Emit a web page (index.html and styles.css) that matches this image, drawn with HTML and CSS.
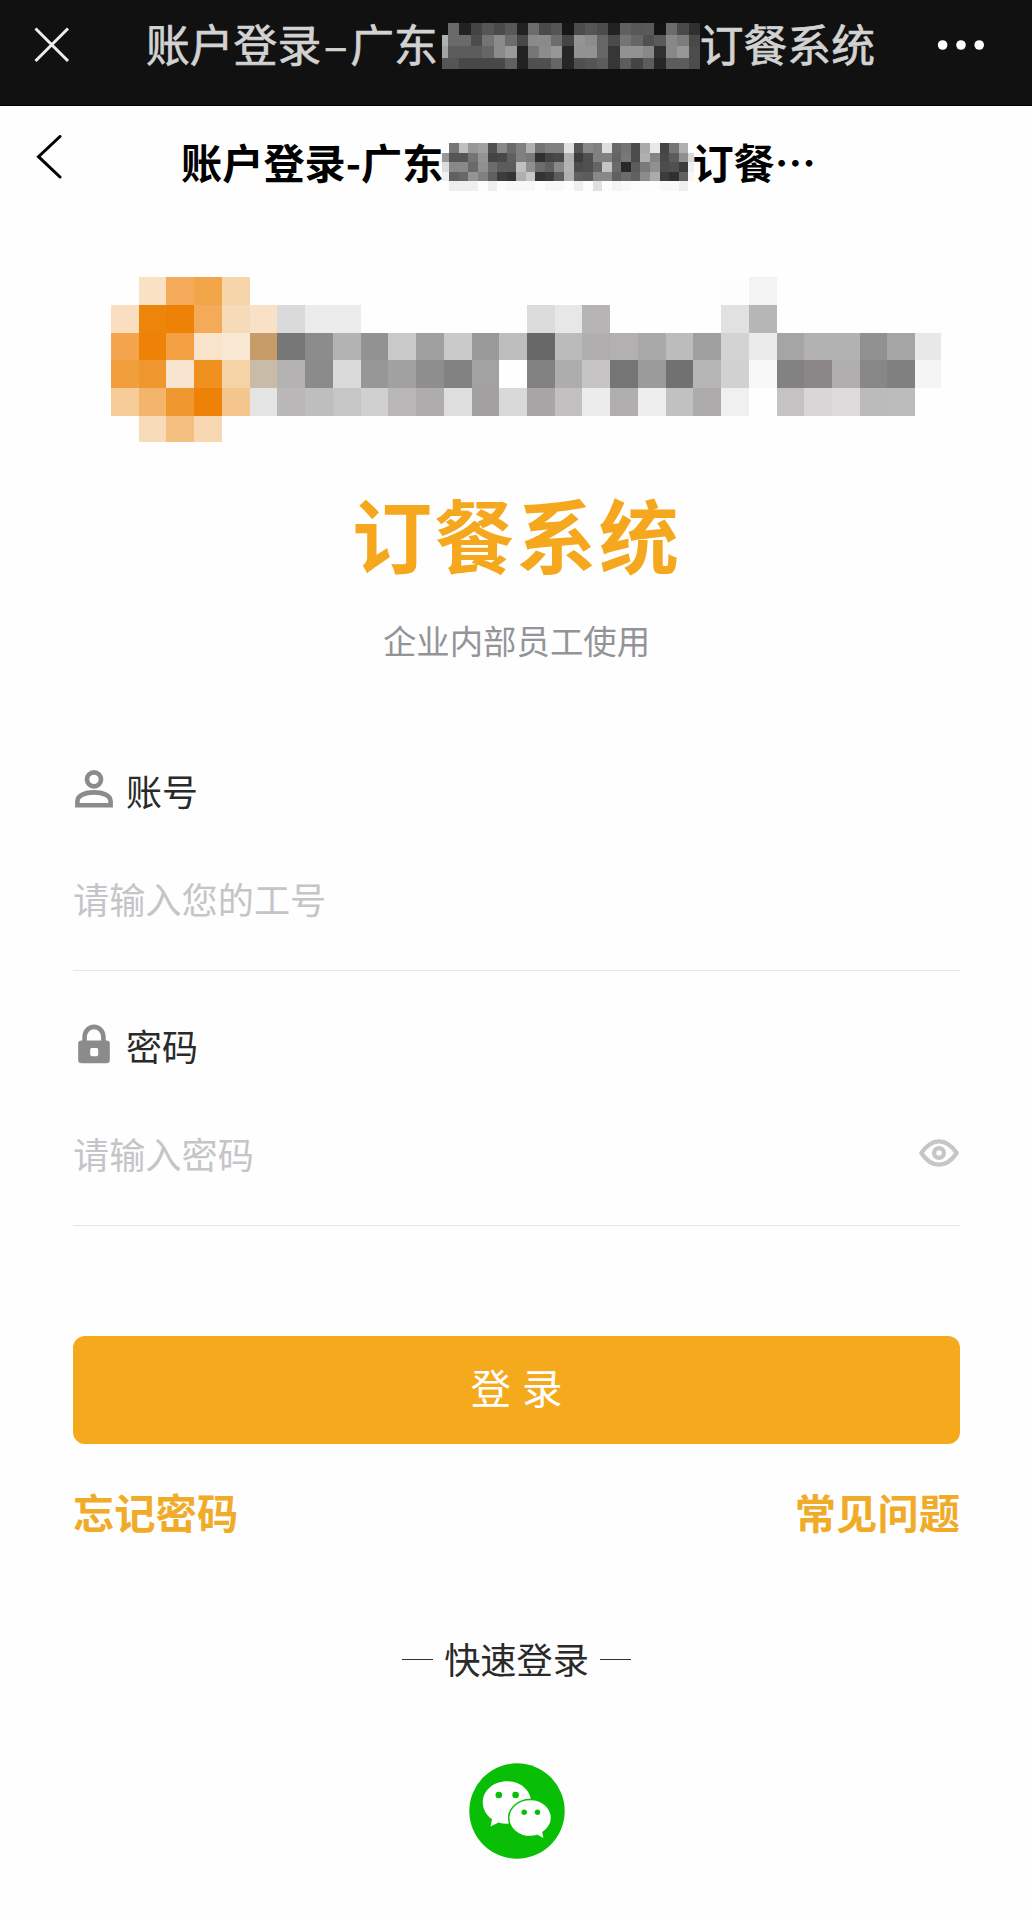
FILE: index.html
```html
<!DOCTYPE html>
<html lang="zh-CN">
  <head>
    <meta charset="UTF-8" />
    <meta name="viewport" content="width=device-width, initial-scale=1.0" />
    <title>账户登录</title>
    <link rel="stylesheet" href="styles.css">
  </head>
  <body>
    <header class="topbar">
      <svg class="close" viewBox="0 0 36 36">
        <path d="M1.5 1.5 34 34M34 1.5 1.5 34" />
      </svg>
      <div class="topbar-title">
        <span>账户登录</span><span class="dash">–</span><span>广东</span>
        <svg class="mosaic mosaic-top" data-mosaic="top" viewBox="0.5 0 22.5 4" preserveAspectRatio="none"></svg>
        <span>订餐系统</span>
      </div>
      <svg class="more" viewBox="0 0 48 12">
        <circle cx="5.6" cy="6" r="4.8" />
        <circle cx="24" cy="6" r="4.8" />
        <circle cx="42.2" cy="6" r="4.8" />
      </svg>
    </header>

    <nav class="navbar">
      <svg class="back" viewBox="0 0 26 44">
        <path d="M24 1.5 2.5 21.7 24 42" />
      </svg>
      <div class="navbar-title">
        <span>账户登录-广东</span>
        <svg class="mosaic mosaic-nav" data-mosaic="nav" viewBox="0.23 0 26.37 5" preserveAspectRatio="none"></svg>
        <span>订餐…</span>
      </div>
    </nav>

    <main class="container">
      <svg class="mosaic mosaic-logo" data-mosaic="logo" viewBox="0 0 29.93 5.94" preserveAspectRatio="none"></svg>
      <h1 class="title">订餐系统</h1>
      <p class="subtitle">企业内部员工使用</p>

      <form class="form">
        <div class="field">
          <label class="label" for="account">
            <svg class="icon" viewBox="0 0 40 40">
              <circle cx="20" cy="10.4" r="7" />
              <path d="M3.4 36.2v-4C3.4 26.4 11 23.4 20 23.4s16.6 3 16.6 8.8v4z" />
            </svg>
            <span class="label-text">账号</span>
          </label>
          <div class="input-row">
            <input class="input" id="account" type="text" placeholder="请输入您的工号" />
          </div>
        </div>
        <div class="field">
          <label class="label" for="password">
            <svg class="icon" viewBox="0 0 40 40">
              <path d="M10.6 18v-5.2a9.4 9.9 0 0 1 18.8 0V18" />
              <path class="lock-body" fill-rule="evenodd" d="M7.5 16.5h25a3.3 3.3 0 0 1 3.3 3.3V36a3.3 3.3 0 0 1-3.3 3.3h-25A3.3 3.3 0 0 1 4.2 36V19.8a3.3 3.3 0 0 1 3.3-3.3zM17.8 24a1.6 1.6 0 0 0-1.6 1.6v5a1.6 1.6 0 0 0 1.6 1.6h4.8a1.6 1.6 0 0 0 1.6-1.6v-5a1.6 1.6 0 0 0-1.6-1.6z" />
            </svg>
            <span class="label-text">密码</span>
          </label>
          <div class="input-row">
            <input class="input" id="password" type="password" placeholder="请输入密码" />
            <svg class="eye" viewBox="0 0 40 28">
              <path d="M2.3 14C7.500 6.300 13 2.300 20 2.300S32.500 6.300 37.700 14C32.500 21.700 27 25.700 20 25.700S7.500 21.700 2.300 14z" />
              <circle cx="20" cy="14" r="4.9" />
            </svg>
          </div>
        </div>
        <button class="submit" type="button">登 录</button>
      </form>

      <div class="links">
        <a class="link">忘记密码</a>
        <a class="link">常见问题</a>
      </div>

      <div class="quick"><span class="quick-text">快速登录</span></div>
      <svg class="wechat" viewBox="0 0 96 96">
        <circle class="wechat-bg" cx="48" cy="48" r="47.7" />
        <path class="bubble" d="M38 18.200c-13.600 0-24.200 9.300-24.200 21.200 0 7 3.600 12.800 9.200 16.800l-1.500 7.400 8-4.100c2.700.8 5.500 1.200 8.500 1.200 13.600 0 24.200-9.400 24.200-21.300S51.600 18.200 38 18.200z" />
        <circle class="wechat-bg" cx="29.8" cy="32" r="3.3" />
        <circle class="wechat-bg" cx="46.6" cy="32" r="3.3" />
        <path class="bubble bubble-front" d="M61.300 36.600c-12 0-21.600 8.200-21.600 18.500s9.600 18.500 21.600 18.500c2.500 0 4.900-.4 7.100-1.100l7 3.800-1.400-7c5-3.400 8.500-8.500 8.500-14.200 0-10.300-9.200-18.700-21.200-18.500z" />
        <circle class="wechat-bg" cx="55.2" cy="49.3" r="2.7" />
        <circle class="wechat-bg" cx="68.5" cy="49.3" r="2.7" />
      </svg>
    </main>

    <script src="mosaic.js"></script>
  </body>
</html>
```

FILE: styles.css
```css
* {
  box-sizing: border-box;
}

body {
  margin: 0;
  min-height: 1920px;
  background: #fefefe;
  color: #2a2a2a;
  font-family: "Noto Sans CJK SC", "Noto Sans", sans-serif;
}

svg {
  display: block;
  flex: none;
}

/* top bar */
.topbar {
  display: flex;
  align-items: center;
  height: 106px;
  padding: 0 47px 15px 34px;
  background: #111;
  border-bottom: 1px solid #000;
}

.close {
  width: 36px;
  height: 36px;
  fill: none;
  stroke: #eee;
  stroke-width: 3;
}

.topbar-title {
  display: flex;
  align-items: center;
  margin-left: 76px;
  font-size: 43.8px;
  line-height: 56px;
  color: #d2d2d2;
  -webkit-text-stroke: 0.7px #d2d2d2;
  white-space: nowrap;
}

.topbar-title span {
  padding-bottom: 4px;
}

.topbar-title .dash {
  width: 29px;
  text-align: center;
}

.more {
  width: 48px;
  height: 12px;
  margin-left: auto;
  margin-bottom: 1px;
  fill: #fff;
}

.mosaic {
  shape-rendering: crispEdges;
}

.mosaic-top {
  width: 258px;
  height: 46px;
  margin: 1px 0 0 4px;
}

/* nav bar */
.navbar {
  display: flex;
  align-items: center;
  height: 114px;
  padding-left: 36px;
  color: #000;
}

.back {
  width: 26px;
  height: 44px;
  margin-bottom: 13px;
  fill: none;
  stroke: #000;
  stroke-width: 3;
  stroke-linecap: round;
}

.navbar-title {
  display: flex;
  align-items: center;
  margin-left: 119px;
  font-size: 41.2px;
  line-height: 60px;
  font-weight: 700;
  white-space: nowrap;
}

.navbar-title span {
  padding-bottom: 4px;
}

.mosaic-nav {
  width: 252px;
  height: 48px;
  margin: 8px -2px 0 -1px;
}

/* page */
.container {
  display: flex;
  flex-direction: column;
  align-items: center;
  padding: 57px 72px 0 73px;
}

.mosaic-logo {
  width: 830px;
  height: 165px;
  margin-left: 19px;
}

.title {
  margin: 50px 0 0;
  font-size: 80px;
  line-height: 80px;
  letter-spacing: 2.2px;
  color: #f5a81e;
}

.subtitle {
  margin: 48px 0 0;
  font-size: 33.4px;
  line-height: 40px;
  color: #939498;
}

.form {
  width: 100%;
  margin-top: 111px;
}

.field {
  margin-bottom: 55px;
  border-bottom: 1px solid #e6e6e6;
}

.label {
  display: flex;
  align-items: center;
  gap: 12px;
  height: 40px;
  padding-left: 1px;
  font-size: 36px;
  line-height: 40px;
}

.label-text {
  padding-bottom: 3px;
}

.icon {
  width: 40px;
  height: 40px;
  margin-bottom: 4px;
  fill: none;
  stroke: #8b8b8b;
  stroke-width: 4.6;
}

.lock-body {
  fill: #8b8b8b;
  stroke: none;
}

.input-row {
  display: flex;
  align-items: center;
  height: 140px;
  margin-top: 19px;
}

.input {
  flex: 1;
  height: 60px;
  padding: 0 0 4px;
  border: none;
  outline: none;
  background: none;
  font-family: inherit;
  font-size: 36.2px;
}

.input::placeholder {
  color: #c5c5c7;
}

.eye {
  width: 40px;
  height: 28px;
  margin: 0 1px 4px 0;
  fill: none;
  stroke: #c6c6c6;
  stroke-width: 4.3;
  stroke-linejoin: round;
}

.submit {
  display: block;
  width: 100%;
  height: 108px;
  margin-top: 110px;
  padding: 0 0 8px;
  border: none;
  border-radius: 12px;
  background: #f5a91d;
  color: #fff;
  font-family: inherit;
  font-size: 40.5px;
  word-spacing: 2px;
}

.links {
  display: flex;
  justify-content: space-between;
  width: 100%;
  margin-top: 42px;
}

.link {
  font-size: 41.3px;
  line-height: 50px;
  font-weight: 700;
  color: #f0ab28;
}

.quick {
  display: flex;
  align-items: center;
  gap: 11px;
  height: 40px;
  margin-top: 103px;
  font-size: 36.2px;
  line-height: 40px;
}

.quick-text {
  padding-bottom: 2px;
}

.quick::before,
.quick::after {
  content: "";
  width: 31px;
  height: 1px;
  background: #333;
}

.wechat {
  width: 96px;
  height: 96px;
  margin-top: 84px;
}

.wechat-bg {
  fill: #08bf06;
}

.bubble {
  fill: #fff;
}

.bubble-front {
  stroke: #08bf06;
  stroke-width: 1.5;
}
```

FILE: mosaic.js
```js
// Each row is a list of cells: "-" is empty, two digits are a grey, six a colour
const mosaics = {
  top: [
    "11 6a 22 44 55 4a 58 22 6c 4a 55 16 4c 55 4c 22 60 58 5a 14 6c 4a 30",
    "b0 6a 6a 4c 74 8a 6c 48 8a 8a 6c 44 94 8c 66 4a 74 66 50 5a 88 7c 48",
    "a4 5c 5c 5c 66 8a 9a 22 76 8c 96 26 92 92 66 36 92 92 88 30 88 98 4c",
    "55 55 48 48 48 48 60 22 50 50 66 26 50 55 5c 36 5c 44 5c 26 5c 5c 4c",
  ],
  nav: [
    "- 76 c0 98 a0 50 88 6a 80 b0 74 80 80 e0 55 88 80 de 68 74 4c aa e8 44 76 b0 -",
    "98 55 55 74 94 44 48 60 80 7a 30 44 48 b0 3c 50 80 80 64 78 4c b0 84 48 5c 90 d8",
    "dc 88 88 6a 90 6c 5c 5c c0 90 6c 60 88 b4 4c 50 64 c4 6a 28 5c 7a 90 4c 50 3c f0",
    "f0 60 68 94 80 60 3c 34 b0 c8 34 3c 5c b0 60 5c 88 88 60 6c 60 8c ac 3c 30 60 f8",
    "- ee ee ee fc ee fc f8 f8 f8 - f8 f8 fc ee fc e0 fc f4 f8 fc fc fc f8 f8 ee -",
  ],
  logo: [
    "- fae1c4 f4aa59 f2a549 f6d5ab - - - - - - - - - - - - - - - - - fd f3",
    "f9dec0 ee850b ee8206 f4aa59 f6dbb8 f9e1c8 da ec ec - - - - - - dc e7 b7b4b5 - - - - e1 b6",
    "f3a44d ee8206 f3a043 f9e3ca f9e8d3 c69c68 77 8c b3 92 c9 a0 ca 99 bd 68 bb b0aeaf b3b0b1 a9 bc 9f d3 eb a5 b2 b2 91 a5 e8",
    "f19f3d f0962f f9e5cf f0901f f6d3a5 c8bba8 b4b2b3 8b da 97 a1 8e 82 a2 - 82 ad c6c4c5 75 9b 71 b6 d1 f8 82 8b8788 b1aeaf 87 80 f5",
    "f6cd99 f2b56b ef982f ee8206 f4c68d e4 bab7b8 be c6 d0 b9b6b7 aeacad de a2a0a1 d9 a7a5a6 c2c0c1 ec b0aeaf ee c1 adaaab f0 - c5c2c3 d8d6d7 dcdadb bb bc -",
    "- f8dbb8 f4bf81 f8d7b3",
  ],
};

document.querySelectorAll("[data-mosaic]").forEach((svg) => {
  mosaics[svg.dataset.mosaic].forEach((row, y) => {
    row.split(" ").forEach((cell, x) => {
      if (cell === "-") return;
      const rect = document.createElementNS("http://www.w3.org/2000/svg", "rect");
      rect.setAttribute("x", x);
      rect.setAttribute("y", y);
      rect.setAttribute("width", 1);
      rect.setAttribute("height", 1);
      rect.setAttribute("fill", "#" + (cell.length === 2 ? cell.repeat(3) : cell));
      svg.appendChild(rect);
    });
  });
});
```
